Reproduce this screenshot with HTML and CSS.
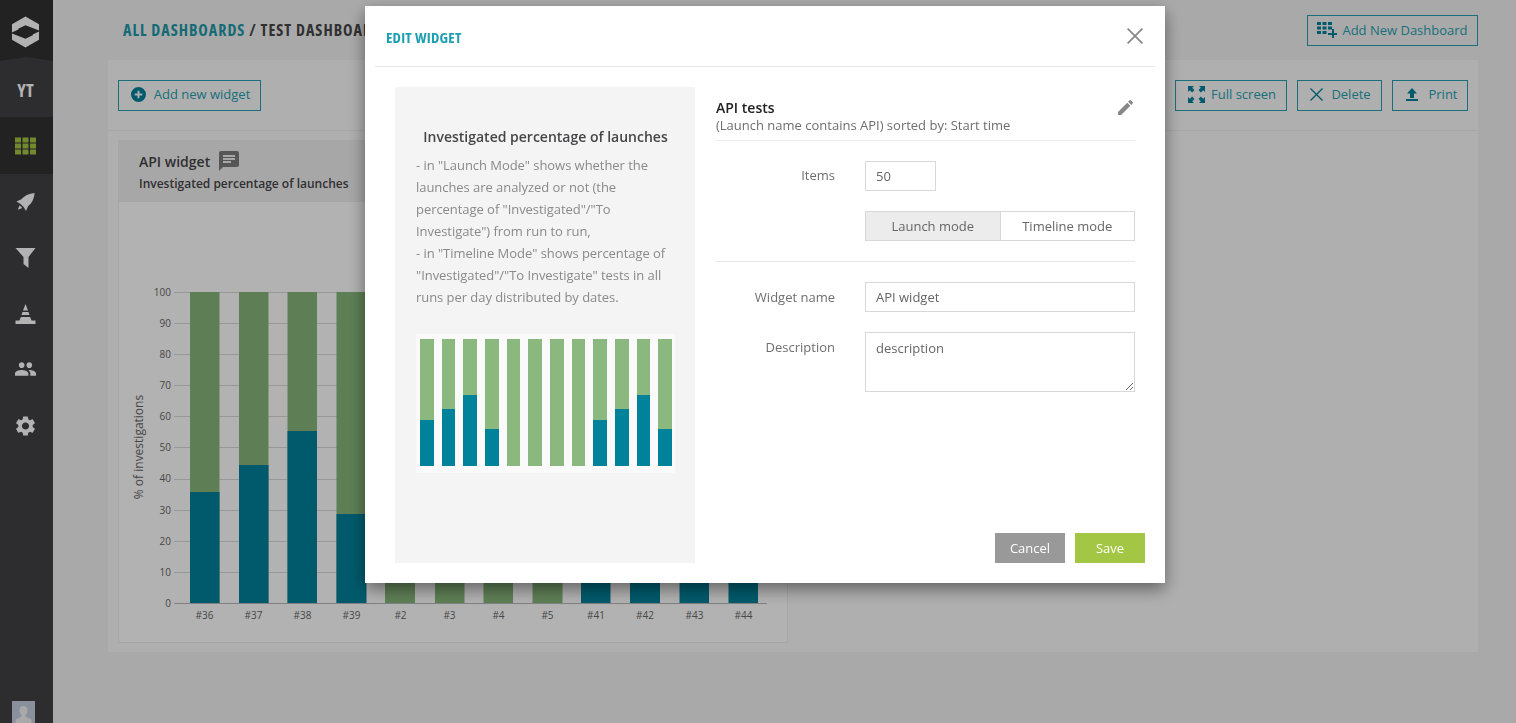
FILE: index.html
```html
<!DOCTYPE html>
<html lang="en">
<head>
  <meta charset="UTF-8" />
  <meta name="viewport" content="width=device-width, initial-scale=1.0" />
  <title>Edit widget</title>
  <link rel="stylesheet" href="styles.css">
</head>
<body>
  <aside class="sidebar">
    <div class="logo">
      <svg class="logo-icon" viewBox="0 0 30 32"><path d="M15 0 29 8V14.500L15 9 7.500 12.700V13.500L1 16.500V8ZM15 32 1 24V17.500L15 23 22.500 19.300V18.500L29 15.500V24Z"/></svg>
    </div>
    <div class="nav-item nav-project">YT</div>
    <div class="nav-item active">
      <svg class="nav-icon" viewBox="0 0 21 17"><path d="M0 0h6v5H0zM7.500 0h6v5h-6zM15 0h6v5h-6zM0 6h6v5H0zM7.500 6h6v5h-6zM15 6h6v5h-6zM0 12h6v5H0zM7.500 12h6v5h-6zM15 12h6v5h-6z"/></svg>
    </div>
    <div class="nav-item nav-launches">
      <svg class="nav-icon" viewBox="0 0 22 22"><path d="M21 1C14.500 1.500 9.500 4 6.500 8L1 10.500l4.200 2.300 4 4L11.500 21l2.500-5.500C18 12.500 20.500 7.500 21 1zM4.500 14.500 2.500 19.500 7.500 17.500z"/></svg>
    </div>
    <div class="nav-item">
      <svg class="nav-icon" viewBox="0 0 20 20"><path d="M0 0h20l-7 9v11l-5-4V9z"/></svg>
    </div>
    <div class="nav-item nav-debug">
      <svg class="nav-icon" viewBox="0 0 20 20"><path d="M10 0l2.500 6.500h-5zM7 8h6l1 3H6zM5.300 13h9.400l1.300 3.500h4V20H0v-3.500h4z"/></svg>
    </div>
    <div class="nav-item nav-members">
      <svg class="nav-icon" viewBox="1 5 22 14"><path d="M16 11c1.660 0 2.990-1.340 2.990-3S17.660 5 16 5s-3 1.340-3 3 1.340 3 3 3zm-8 0c1.660 0 2.990-1.340 2.990-3S9.660 5 8 5 5 6.340 5 8s1.340 3 3 3zm0 2c-2.330 0-7 1.170-7 3.500V19h14v-2.500C15 14.170 10.330 13 8 13zm8 0c-.290 0-.620.020-.970.050 1.160.840 1.970 1.970 1.970 3.450V19h6v-2.500c0-2.330-4.670-3.500-7-3.500z"/></svg>
    </div>
    <div class="nav-item nav-settings">
      <svg class="nav-icon" viewBox="2.500 2 19 20"><path d="M19.140 12.940c.040-.300.060-.610.060-.940 0-.320-.020-.640-.070-.940l2.030-1.580a.490.490 0 0 0 .120-.610l-1.920-3.320a.488.488 0 0 0-.590-.220l-2.390.960c-.500-.380-1.030-.700-1.620-.940l-.360-2.540a.484.484 0 0 0-.480-.410h-3.840c-.240 0-.430.170-.470.410l-.360 2.540c-.590.240-1.130.570-1.620.940l-2.390-.960c-.220-.080-.470 0-.590.220L2.740 8.870c-.120.210-.080.470.120.610l2.030 1.580c-.050.300-.090.630-.090.940s.020.640.070.940l-2.030 1.580a.490.490 0 0 0-.120.610l1.920 3.320c.120.220.370.290.590.220l2.390-.960c.500.380 1.030.700 1.620.940l.360 2.540c.050.240.240.410.480.410h3.840c.240 0 .440-.170.470-.410l.360-2.540c.590-.240 1.130-.560 1.620-.940l2.390.960c.220.080.470 0 .590-.220l1.920-3.320c.120-.220.070-.470-.120-.610l-2.010-1.580zM12 15.600c-1.980 0-3.600-1.620-3.600-3.600s1.620-3.600 3.600-3.600 3.600 1.620 3.600 3.600-1.620 3.600-3.600 3.600z"/></svg>
    </div>
    <div class="avatar">
      <svg viewBox="0 0 23 23"><path d="M11.500 5c2.500 0 4 2 4 4.500 0 2-1 3.500-2 4.500v1.500l6 3V23h-16v-4.500l6-3V14c-1-1-2-2.500-2-4.500C7.500 7 9 5 11.500 5z"/></svg>
    </div>
  </aside>

  <main class="content">
    <header class="topbar">
      <h1 class="crumbs"><span class="crumb-link">ALL DASHBOARDS</span> / TEST DASHBOARD</h1>
      <button class="btn btn-dashboard">
        <svg class="btn-icon icon-dash" viewBox="0 0 20 16"><path d="M0 0h4v3H0zM5.500 0h4v3h-4zM11 0h4v3h-4zM0 4.500h4v3H0zM5.500 4.500h4v3h-4zM11 4.500h4v3h-4zM0 9h4v3H0zM5.500 9h4v3h-4zM15 7h2v4h3v2h-3v3h-2v-3h-4v-2h4z"/></svg>
        Add New Dashboard
      </button>
    </header>

    <section class="panel">
      <div class="toolbar">
        <button class="btn btn-widget">
          <svg class="btn-icon icon-add" viewBox="0 0 16 16"><path fill-rule="evenodd" d="M8 0a8 8 0 1 0 0 16A8 8 0 0 0 8 0zM7 4h2v3h3v2H9v3H7V9H4V7h3z"/></svg>
          Add new widget
        </button>
        <div class="toolbar-right">
          <button class="btn btn-full">
            <svg class="btn-icon icon-full" viewBox="0 0 17 17"><path d="M0 0h6L4.200 1.800 6.500 4.100 4.100 6.500 1.800 4.200 0 6zM17 0v6l-1.800-1.800-2.300 2.300-2.400-2.400 2.300-2.300L11 0zM0 17v-6l1.800 1.800 2.300-2.300 2.400 2.400-2.300 2.300L6 17zM17 17h-6l1.800-1.800-2.300-2.300 2.400-2.400 2.300 2.300L17 11z"/></svg>
            Full screen
          </button>
          <button class="btn btn-delete">
            <svg class="btn-icon icon-delete" viewBox="0 0 14 14"><path d="M1 0 7 6 13 0 14 1 8 7 14 13 13 14 7 8 1 14 0 13 6 7 0 1z"/></svg>
            Delete
          </button>
          <button class="btn btn-print">
            <svg class="btn-icon icon-print" viewBox="0 0 12 13"><path d="M6 0l5 5.500H8V10H4V5.500H1zM0 11h12v2H0z"/></svg>
            Print
          </button>
        </div>
      </div>

      <article class="widget">
        <div class="widget-head">
          <div class="widget-title">
            API widget
            <svg class="comment-icon" viewBox="2 2 20 20"><path d="M20 2H4c-1.100 0-2 .900-2 2v18l4-4h14c1.100 0 2-.900 2-2V4c0-1.100-.900-2-2-2zM6 9h12v2H6zm8 5H6v-2h8zm4-6H6V6h12z"/></svg>
          </div>
          <div class="widget-type">Investigated percentage of launches</div>
        </div>
        <div class="widget-body">
          <svg class="chart" viewBox="119 202 668 440">
            <g class="grid">
              <path d="M174 292.500H767M174 323.500H767M174 354.500H767M174 385.500H767M174 416.500H767M174 447.500H767M174 479.500H767M174 510.500H767M174 541.500H767M174 572.500H767"/>
              <path class="axis" d="M174 603.500H767"/>
            </g>
            <g class="ticks">
              <text x="171" y="296">100</text><text x="171" y="327">90</text><text x="171" y="358">80</text>
              <text x="171" y="389">70</text><text x="171" y="420">60</text><text x="171" y="451">50</text>
              <text x="171" y="482">40</text><text x="171" y="514">30</text><text x="171" y="545">20</text>
              <text x="171" y="576">10</text><text x="171" y="607">0</text>
            </g>
            <text class="y-title" transform="translate(143 447) rotate(-90)">% of investigations</text>
            <g class="bars-green">
              <rect x="190" y="292" width="29.500" height="311"/><rect x="239" y="292" width="29.500" height="311"/>
              <rect x="287.500" y="292" width="29.500" height="311"/><rect x="336.500" y="292" width="29.500" height="311"/>
              <rect x="385" y="292" width="30" height="311"/><rect x="435" y="292" width="29.500" height="311"/>
              <rect x="483.500" y="292" width="29.500" height="311"/><rect x="532.500" y="292" width="30" height="311"/>
            </g>
            <g class="bars-blue">
              <rect x="190" y="492" width="29.500" height="111"/><rect x="239" y="465" width="29.500" height="138"/>
              <rect x="287.500" y="431" width="29.500" height="172"/><rect x="336.500" y="514" width="30" height="89"/>
              <rect x="581" y="500" width="29.500" height="103"/><rect x="630" y="500" width="30" height="103"/>
              <rect x="679.500" y="500" width="29.500" height="103"/><rect x="728.500" y="500" width="29.500" height="103"/>
            </g>
            <g class="labels">
              <text x="204.500" y="619">#36</text><text x="253.500" y="619">#37</text><text x="302.500" y="619">#38</text>
              <text x="351.500" y="619">#39</text><text x="400.500" y="619">#2</text><text x="449.500" y="619">#3</text>
              <text x="498.500" y="619">#4</text><text x="547.500" y="619">#5</text><text x="596" y="619">#41</text>
              <text x="645" y="619">#42</text><text x="694.500" y="619">#43</text><text x="743.500" y="619">#44</text>
            </g>
          </svg>
        </div>
      </article>
    </section>
  </main>

  <div class="backdrop">
    <div class="modal">
      <div class="modal-head">
        <h2 class="modal-title">EDIT WIDGET</h2>
        <svg class="close-icon" viewBox="0 0 16 16"><path d="M1.200 0 8 6.800 14.800 0 16 1.200 9.200 8 16 14.800 14.800 16 8 9.200 1.200 16 0 14.800 6.800 8 0 1.200z"/></svg>
      </div>
      <div class="modal-body">
        <div class="preview">
          <h3 class="preview-title">Investigated percentage of launches</h3>
          <p class="preview-text">- in "Launch Mode" shows whether the launches are analyzed or not (the percentage of "Investigated"/"To Investigate") from run to run,<br>- in "Timeline Mode" shows percentage of "Investigated"/"To Investigate" tests in all runs per day distributed by dates.</p>
          <div class="thumb">
            <div class="thumb-bar"><div class="thumb-fill" style="height: 36%"></div></div>
            <div class="thumb-bar"><div class="thumb-fill" style="height: 45%"></div></div>
            <div class="thumb-bar"><div class="thumb-fill" style="height: 56%"></div></div>
            <div class="thumb-bar"><div class="thumb-fill" style="height: 29%"></div></div>
            <div class="thumb-bar"></div>
            <div class="thumb-bar"></div>
            <div class="thumb-bar"></div>
            <div class="thumb-bar"></div>
            <div class="thumb-bar"><div class="thumb-fill" style="height: 36%"></div></div>
            <div class="thumb-bar"><div class="thumb-fill" style="height: 45%"></div></div>
            <div class="thumb-bar"><div class="thumb-fill" style="height: 56%"></div></div>
            <div class="thumb-bar"><div class="thumb-fill" style="height: 29%"></div></div>
          </div>
        </div>
        <div class="settings">
          <div class="filter-info">
            <div>
              <div class="filter-name">API tests</div>
              <div class="filter-desc">(Launch name contains API) sorted by: Start time</div>
            </div>
            <svg class="edit-icon" viewBox="3 3 18 18"><path d="M3 17.250V21h3.750L17.810 9.940l-3.750-3.750L3 17.250zM20.710 7.040a1 1 0 0 0 0-1.410l-2.340-2.340a1 1 0 0 0-1.410 0l-1.830 1.830 3.750 3.750 1.830-1.830z"/></svg>
          </div>
          <div class="form-row form-row-items">
            <label class="form-label">Items</label>
            <input class="field field-items" type="text" value="50">
          </div>
          <div class="mode-row">
            <div class="mode-toggle">
              <div class="mode mode-on">Launch mode</div>
              <div class="mode">Timeline mode</div>
            </div>
          </div>
          <div class="form-row form-row-name">
            <label class="form-label">Widget name</label>
            <input class="field" type="text" value="API widget">
          </div>
          <div class="form-row form-row-desc">
            <label class="form-label">Description</label>
            <textarea class="field field-area">description</textarea>
          </div>
          <div class="modal-foot">
            <button class="action action-cancel">Cancel</button>
            <button class="action action-save">Save</button>
          </div>
        </div>
      </div>
    </div>
  </div>
</body>
</html>
```

FILE: styles.css
```css
* {
  box-sizing: border-box;
}

html, body {
  height: 100%;
}

body {
  margin: 0;
  display: flex;
  overflow: hidden;
  background-color: #f3f3f3;
  font-family: "Open Sans", "Liberation Sans", sans-serif;
  font-size: 13px;
  color: #464547;
}

/* Sidebar */
.sidebar {
  width: 53px;
  flex-shrink: 0;
  height: 100%;
  display: flex;
  flex-direction: column;
  overflow: hidden;
  background-color: #414144;
}

.logo {
  height: 61px;
  flex-shrink: 0;
  display: flex;
  justify-content: center;
  padding: 16px 2px 0 0;
  background-color: #323232;
  clip-path: polygon(0 0, 100% 0, 100% 100%, 50% 57px, 0 100%);
}

.logo-icon {
  width: 29px;
  height: 32px;
  fill: #fff;
}

.nav-item {
  height: 57px;
  flex-shrink: 0;
  display: flex;
  align-items: center;
  justify-content: center;
  padding-right: 2px;
}

.nav-project {
  margin-top: -4px;
  height: 60px;
  padding-top: 5px;
  font-family: "Liberation Sans Narrow", "Open Sans", sans-serif;
  font-stretch: 75%;
  font-size: 18px;
  font-weight: 700;
  color: #fff;
}

.nav-item.active {
  background-color: #323232;
}

.nav-item.active .nav-icon {
  fill: #a3c644;
}

.nav-launches {
  height: 55px;
}

.nav-debug {
  height: 56px;
}

.nav-members {
  height: 53px;
}

.nav-settings {
  height: 61px;
}

.nav-icon {
  width: 21px;
  height: 20px;
  fill: #fff;
}

.avatar {
  width: 23px;
  height: 23px;
  margin: auto 0 -1px 12px;
  flex-shrink: 0;
  background-color: #c5cede;
}

.avatar svg {
  display: block;
  fill: #f2f2f2;
}

/* Page */
.content {
  flex: 1;
  padding: 0 38px 0 55px;
}

.topbar {
  height: 60px;
  display: flex;
  align-items: center;
  justify-content: space-between;
  padding-left: 15px;
}

.crumbs {
  margin: 0;
  font-family: "Liberation Sans Narrow", "Open Sans", sans-serif;
  font-stretch: 75%;
  font-size: 16px;
  font-weight: 700;
  letter-spacing: 1px;
  color: #464547;
}

.crumb-link {
  color: #1d99aa;
}

.btn {
  height: 31px;
  display: inline-flex;
  align-items: center;
  justify-content: center;
  padding: 0;
  border: 1px solid #26a0b1;
  background: transparent;
  font-family: inherit;
  font-size: 13px;
  white-space: nowrap;
  color: #26a0b1;
}

.toolbar .btn {
  padding-bottom: 3px;
}

.btn-icon {
  fill: #00829b;
  flex-shrink: 0;
}

.btn-dashboard {
  width: 171px;
}

.icon-dash {
  width: 20px;
  height: 16px;
  margin-right: 5px;
}

.icon-add {
  width: 15px;
  height: 15px;
  margin-right: 8px;
}

.icon-full {
  width: 17px;
  height: 17px;
  margin-right: 6px;
}

.icon-delete {
  width: 13px;
  height: 13px;
  margin-right: 8px;
}

.icon-print {
  width: 12px;
  height: 13px;
  margin-right: 10px;
}

.panel {
  height: 592px;
  padding: 0 10px;
  background-color: #fbfbfb;
}

.toolbar {
  height: 71px;
  margin: 0 -10px;
  padding: 20px 10px 0;
  display: flex;
  justify-content: space-between;
  align-items: flex-start;
  border-bottom: 1px solid #eeeeee;
}

.toolbar-right {
  display: flex;
  gap: 10px;
}

.btn-widget {
  width: 143px;
  padding-left: 2px;
}

.btn-full {
  width: 112px;
  padding-left: 2px;
}

.btn-delete {
  width: 85px;
  padding-left: 2px;
}

.btn-print {
  width: 76px;
  padding-left: 4px;
}

.widget {
  width: 670px;
  height: 503px;
  margin-top: 9px;
  display: flex;
  flex-direction: column;
  border: 1px solid #eeeeee;
  background-color: #fff;
}

.widget-head {
  height: 61px;
  flex-shrink: 0;
  padding: 10px 20px 0;
  background-color: #f0f0f0;
}

.widget-title {
  display: flex;
  align-items: center;
  gap: 9px;
  font-size: 14px;
  font-weight: 600;
  color: #464547;
}

.comment-icon {
  width: 20px;
  height: 20px;
  fill: #7c7c7c;
}

.widget-type {
  margin-top: 4px;
  font-size: 12px;
  font-weight: 600;
  color: #464547;
}

.chart {
  display: block;
  width: 668px;
  height: 440px;
}

.grid path {
  fill: none;
  stroke: #dadada;
  stroke-width: 1;
}

.grid .axis {
  stroke: #b8b8b8;
}

.ticks text {
  font-size: 10px;
  text-anchor: end;
  fill: #666;
}

.labels text {
  font-size: 10px;
  text-anchor: middle;
  fill: #666;
}

.y-title {
  font-size: 12px;
  text-anchor: middle;
  fill: #666;
}

.bars-green rect {
  fill: #87b77b;
}

.bars-blue rect {
  fill: #00829b;
}

/* Modal */
.backdrop {
  position: fixed;
  inset: 0;
  display: flex;
  justify-content: center;
  align-items: flex-start;
  padding: 6px 0 0 14px;
  background-color: rgba(0, 0, 0, 0.3);
}

.modal {
  width: 800px;
  height: 577px;
  display: flex;
  flex-direction: column;
  padding: 0 10px;
  background-color: #fff;
  box-shadow: 0 6px 16px rgba(0, 0, 0, 0.45);
}

.modal-head {
  height: 61px;
  flex-shrink: 0;
  display: flex;
  align-items: center;
  justify-content: space-between;
  padding: 0 12px 0 11px;
  border-bottom: 1px solid #e6e6e6;
}

.modal-title {
  margin: 1px 0 0;
  font-family: "Liberation Sans Narrow", "Open Sans", sans-serif;
  font-stretch: 75%;
  font-size: 15px;
  font-weight: 700;
  letter-spacing: 0.2px;
  color: #1d9fb3;
}

.close-icon {
  width: 16px;
  height: 16px;
  margin-top: -1px;
  fill: #888;
}

.modal-body {
  height: 496px;
  display: flex;
  padding: 20px 10px 0 20px;
  gap: 21px;
}

.preview {
  width: 300px;
  height: 476px;
  flex-shrink: 0;
  padding: 40px 20px 0 21px;
  background-color: #f4f4f4;
}

.preview-title {
  margin: 0 0 8px;
  text-align: center;
  font-size: 14px;
  font-weight: 600;
  color: #464547;
}

.preview-text {
  margin: 0;
  font-size: 13px;
  line-height: 22px;
  letter-spacing: -0.05px;
  color: #8a8a8a;
}

.thumb {
  width: 259px;
  height: 139px;
  margin-top: 26px;
  padding: 5px 3px 7px 4px;
  display: flex;
  justify-content: space-between;
  background-color: #fafafa;
}

.thumb-bar {
  width: 13.500px;
  display: flex;
  flex-direction: column;
  justify-content: flex-end;
  background-color: #8ab87f;
}

.thumb-fill {
  background-color: #00829b;
}

.settings {
  flex: 1;
  min-width: 0;
  display: flex;
  flex-direction: column;
}

.filter-info {
  height: 54px;
  margin-right: 10px;
  display: flex;
  justify-content: space-between;
  padding-top: 12px;
  border-bottom: 1px solid #ececec;
}

.filter-name {
  font-size: 14px;
  font-weight: 600;
  line-height: 18px;
  color: #222;
}

.filter-desc {
  font-size: 13px;
  line-height: 16px;
  color: #6e6e6e;
}

.edit-icon {
  width: 15px;
  height: 15px;
  margin: 1px 2px 0 0;
  fill: #888;
}

.form-row {
  display: grid;
  grid-template-columns: 119px 1fr;
  column-gap: 30px;
  margin-right: 10px;
}

.form-row-items {
  margin-top: 20px;
}

.form-label {
  padding-top: 6px;
  text-align: right;
  font-size: 13px;
  color: #6e6e6e;
}

.form-row-items .form-label {
  padding-top: 5px;
}

.field {
  width: 100%;
  height: 30px;
  padding: 0 10px;
  border: 1px solid #d8d8d8;
  border-radius: 0;
  background-color: #fff;
  font-family: inherit;
  font-size: 13px;
  color: #666;
}

.field-items {
  width: 71px;
}

.field-area {
  display: block;
  height: 60px;
  padding-top: 6px;
}

.mode-row {
  margin: 20px 10px 0 0;
  padding: 0 0 20px 149px;
  border-bottom: 1px solid #e6e6e6;
}

.mode-toggle {
  height: 30px;
  display: flex;
  border: 1px solid #d8d8d8;
}

.mode {
  flex: 1;
  display: flex;
  align-items: center;
  justify-content: center;
  font-size: 13px;
  color: #666;
}

.mode-on {
  background-color: #ececec;
  border-right: 1px solid #d8d8d8;
}

.form-row-name {
  margin-top: 20px;
}

.form-row-desc {
  margin-top: 20px;
}

.modal-foot {
  margin-top: auto;
  display: flex;
  justify-content: flex-end;
  gap: 10px;
}

.action {
  width: 70px;
  height: 30px;
  border: none;
  font-family: inherit;
  font-size: 13px;
  color: #fff;
}

.action-cancel {
  background-color: #999;
}

.action-save {
  background-color: #a3c644;
}
```
